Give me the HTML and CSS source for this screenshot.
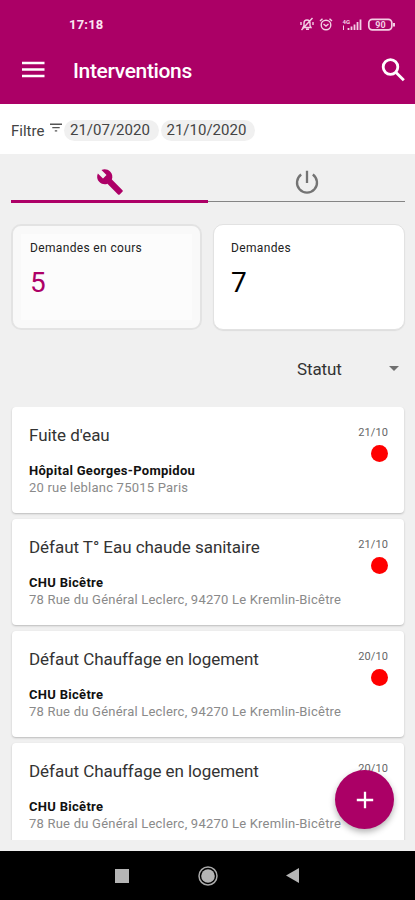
FILE: index.html
```html
<!DOCTYPE html>
<html lang="fr">
<head>
<meta charset="utf-8">
<meta name="viewport" content="width=device-width, initial-scale=1">
<title>Interventions</title>
<link rel="stylesheet" href="styles.css">
</head>
<body>
<div class="screen">
  <header class="header">
    <div class="status">
      <span class="clock">17:18</span>
      <svg class="status-icons" width="98" height="16" viewBox="0 0 98 16" fill="none" stroke="#f3cfe4" stroke-width="1.4">
        <path d="M2 11.500h8l-1-2V7c0-4-6-4-6 0v2.500zM5 13.300h3M.5 14 11.500 2M0 6v3M12 6v3"/>
        <circle cx="25" cy="9" r="4.800"/>
        <path d="M19 5l2.500-2.300M31 5l-2.500-2.300M22.500 8l2.500 2 2.500-2"/>
        <path d="M47.500 14v-2M50.500 14v-3.500M53.500 14V8.500M56.500 14V6M59.500 14V3.500" stroke-width="1.800"/>
        <path d="M42.500 9.500V14" stroke-width="1"/>
        <text class="net" x="41.500" y="7.500">4G</text>
        <rect x="67.800" y="3.300" width="23" height="10.500" rx="3.500" stroke-width="1.700"/>
        <path d="M93 7v3.500" stroke-width="2"/>
        <text class="charge" x="79.500" y="11.700" text-anchor="middle">90</text>
      </svg>
    </div>
    <div class="bar">
      <svg width="24" height="18" viewBox="0 0 24 18" fill="#fff"><path d="M1 .8h22.500v2.500H1zM1 7.300h22.500v2.500H1zM1 13.800h22.500v2.500H1z"/></svg>
      <h1>Interventions</h1>
      <svg class="search" width="24" height="24" viewBox="0 0 24 24" fill="none" stroke="#fff" stroke-width="2.800"><circle cx="9.500" cy="9" r="7.300"/><path d="M14.800 14.300l8 8"/></svg>
    </div>
  </header>

  <div class="filter">
    <span class="filter-label">Filtre</span>
    <svg width="12" height="10" viewBox="0 0 12 10" fill="#555"><path d="M0 .5h12v1.400H0zM2.300 4h7.400v1.300H2.300zM4.800 7.300h2.400v1.300H4.800z"/></svg>
    <span class="chip">21/07/2020</span>
    <span class="chip">21/10/2020</span>
  </div>

  <nav class="tabs">
    <div class="tab active">
      <svg width="28" height="28" viewBox="0 0 24 24" fill="#ad0067"><path d="M22.700 19l-9.100-9.100c.9-2.300.4-5-1.500-6.900-2-2-5-2.400-7.400-1.300L9 6 6 9 1.600 4.700C.4 7.100.9 10.100 2.900 12.100c1.900 1.900 4.600 2.400 6.900 1.500l9.100 9.100c.4.400 1 .4 1.400 0l2.300-2.300c.5-.4.500-1.100.1-1.400z"/></svg>
    </div>
    <div class="tab">
      <svg width="24" height="24" viewBox="0 0 24 24" fill="none" stroke="#747474" stroke-width="2.300"><path d="M12 .7V13M6.200 4.500a10 10 0 1 0 11.600 0"/></svg>
    </div>
  </nav>

  <section class="stats">
    <div class="stat current"><span>Demandes en cours</span><strong>5</strong></div>
    <div class="stat"><span>Demandes</span><strong>7</strong></div>
  </section>

  <div class="sort"><span>Statut</span><i class="caret"></i></div>

  <main class="list">
    <article class="card">
      <div><h2>Fuite d'eau</h2><b class="place">Hôpital Georges-Pompidou</b><p>20 rue leblanc 75015 Paris</p></div>
      <div class="side"><time>21/10</time><i class="dot"></i></div>
    </article>
    <article class="card">
      <div><h2>Défaut T° Eau chaude sanitaire</h2><b class="place">CHU Bicêtre</b><p>78 Rue du Général Leclerc, 94270 Le Kremlin-Bicêtre</p></div>
      <div class="side"><time>21/10</time><i class="dot"></i></div>
    </article>
    <article class="card">
      <div><h2>Défaut Chauffage en logement</h2><b class="place">CHU Bicêtre</b><p>78 Rue du Général Leclerc, 94270 Le Kremlin-Bicêtre</p></div>
      <div class="side"><time>20/10</time><i class="dot"></i></div>
    </article>
    <article class="card">
      <div><h2>Défaut Chauffage en logement</h2><b class="place">CHU Bicêtre</b><p>78 Rue du Général Leclerc, 94270 Le Kremlin-Bicêtre</p></div>
      <div class="side"><time>20/10</time><i class="dot"></i></div>
    </article>
  </main>

  <button class="fab" aria-label="Ajouter"><svg width="18" height="18" viewBox="0 0 18 18" stroke="#fff" stroke-width="2.300"><path d="M9 .8v16.400M.8 9h16.400"/></svg></button>

  <footer class="navbar">
    <svg width="14" height="14" viewBox="0 0 14 14"><path d="M0 0h14v14H0z" fill="#b5b5b5"/></svg>
    <svg width="20" height="20" viewBox="0 0 20 20"><circle cx="10" cy="10" r="9" fill="none" stroke="#aaa" stroke-width="1.500"/><circle cx="10" cy="10" r="6.800" fill="#b5b5b5"/></svg>
    <svg width="13" height="15" viewBox="0 0 13 15"><path d="M13 0v15L0 7.500z" fill="#b5b5b5"/></svg>
  </footer>
</div>
</body>
</html>
```
FILE: styles.css
```css
* { box-sizing: border-box; }
body { margin: 0; font-family: Roboto, "Liberation Sans", sans-serif; color: #222; }
h1, h2, p { margin: 0; font-weight: 400; }
svg { display: block; flex: none; }

.screen { position: relative; width: 415px; height: 900px; overflow: hidden; background: #f0f0f0; display: flex; flex-direction: column; }

.header { height: 104px; flex: none; background: #ab0066; color: #fff; }
.status { height: 48px; padding: 0 16px 0 69px; display: flex; align-items: center; justify-content: space-between; }
.status-icons { overflow: visible; }
.clock { font-size: 13px; font-weight: 700; letter-spacing: .2px; color: #fbe6f2; }
.net { font-size: 6px; font-weight: 700; fill: #f3cfe4; stroke: none; }
.charge { font-size: 9px; font-weight: 700; fill: #f3cfe4; stroke: none; }
.bar { height: 44px; padding: 0 10px 0 21px; display: flex; align-items: center; }
.bar h1 { margin-left: 28px; padding-top: 1px; font-size: 21px; line-height: 24px; font-weight: 500; letter-spacing: -.35px; }
.search { margin-left: auto; }

.filter { height: 50px; flex: none; background: #fff; padding: 3px 0 0 11px; display: flex; align-items: center; color: #444; font-size: 15px; }
.filter-label { width: 39px; }
.filter svg { margin-bottom: 6px; }
.chip { height: 21px; line-height: 21px; margin-left: 2px; padding: 0 6px; width: 94.500px; border-radius: 11px; background: #f0f0f0; }

.tabs { height: 49px; flex: none; margin: 0 10px 0 11px; display: flex; }
.tab { flex: 1; display: flex; justify-content: center; padding-top: 16px; border-bottom: 1px solid #858585; height: 48px; }
.tab.active { border-bottom: 3px solid #ad0067; height: 49px; padding-top: 14px; }

.stats { height: 106px; flex: none; margin: 21px 10px 0 11px; display: grid; grid-template-columns: 191px 192px; gap: 11px; }
.stat { padding: 15px 17px; border: 1px solid #e2e2e2; border-radius: 10px; background: #fff; box-shadow: 0 1px 1px #ddd; display: flex; flex-direction: column; }
.stat.current { border: 2px solid #e3e3e3; padding: 14px 17px; background: #fcfcfc; box-shadow: inset 0 0 0 8px #f9f9f9; }
.stat span { font-size: 12px; line-height: 16px; letter-spacing: .35px; }
.stat strong { margin-top: 10px; font-size: 28px; line-height: 34px; font-weight: 400; color: #000; }
.stat.current strong { color: #ad0067; }

.sort { height: 77px; flex: none; padding: 0 16px 0 297px; display: flex; align-items: center; justify-content: space-between; font-size: 17px; letter-spacing: -.1px; color: #333; }
.caret { border: 5px solid transparent; border-top-color: #707070; border-bottom: 0; }

.list { height: 433px; flex: none; padding: 0 11px 0 12px; overflow: hidden; display: flex; flex-direction: column; gap: 6px; }
.card { height: 106px; flex: none; padding: 17px 16px 0 17px; background: #fff; border-radius: 4px; box-shadow: 0 1px 2px #bbb; display: flex; justify-content: space-between; }
.card h2 { font-size: 17px; line-height: 22px; letter-spacing: -.05px; color: #333; white-space: nowrap; }
.place { display: block; margin-top: 16px; font-size: 13px; line-height: 17px; color: #111; letter-spacing: .3px; }
.card p { font-size: 13px; line-height: 17px; color: #8a8a8a; letter-spacing: .22px; white-space: nowrap; }
.side { width: 0; padding-top: 1px; display: flex; flex-direction: column; align-items: flex-end; }
.side time { font-size: 11px; line-height: 15px; color: #666; letter-spacing: .1px; }
.dot { width: 17px; height: 17px; margin-top: 5px; border-radius: 50%; background: #f00; flex: none; }

.fab { position: absolute; left: 335px; top: 770px; width: 59px; height: 59px; padding: 0; border: 0; border-radius: 50%; background: #ab0066; box-shadow: 0 3px 6px rgba(0,0,0,.3); display: flex; align-items: center; justify-content: center; }

.navbar { height: 49px; margin-top: auto; flex: none; background: #000; padding: 0 116px 0 115px; display: flex; align-items: center; justify-content: space-between; }
```
